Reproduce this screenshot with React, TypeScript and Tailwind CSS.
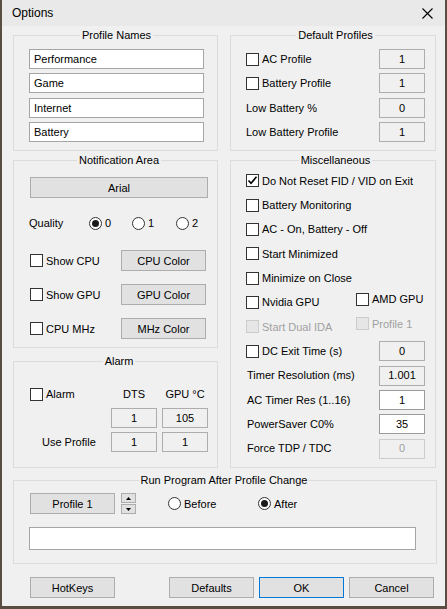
import React from "react";

function Check({ checked = false, disabled = false }: { checked?: boolean; disabled?: boolean }) {
  return (
    <span
      className={
        "flex h-[13px] w-[13px] shrink-0 items-center justify-center border " +
        (disabled ? "border-[#cccccc] bg-[#e6e6e6]" : "border-[#333333] bg-white")
      }
    >
      {checked && (
        <svg width="11" height="11" viewBox="0 0 11 11">
          <path d="M1.5 5.5 L4 8.3 L9.5 1.8" fill="none" stroke="#000" strokeWidth="1.6" />
        </svg>
      )}
    </span>
  );
}

function CheckLabel({
  label,
  checked = false,
  disabled = false,
}: {
  label: string;
  checked?: boolean;
  disabled?: boolean;
}) {
  return (
    <span className="flex items-center gap-[3px]">
      <Check checked={checked} disabled={disabled} />
      <span className={disabled ? "text-[#a0a0a0]" : ""}>{label}</span>
    </span>
  );
}

function Radio({ label, checked = false }: { label: string; checked?: boolean }) {
  return (
    <span className="flex items-center gap-[3px]">
      <span className="flex h-[13px] w-[13px] shrink-0 items-center justify-center rounded-full border border-[#333333] bg-white">
        {checked && <span className="h-[7px] w-[7px] rounded-full bg-[#1a1a1a]" />}
      </span>
      <span>{label}</span>
    </span>
  );
}

function ValueBox({
  value,
  variant = "ro",
}: {
  value: string;
  variant?: "ro" | "edit" | "off";
}) {
  const cls =
    variant === "edit"
      ? "border-[#9a9a9a] bg-white text-black"
      : variant === "off"
        ? "border-[#cccccc] bg-[#f0f0f0] text-[#a0a0a0]"
        : "border-[#adadad] bg-[#f0f0f0] text-black";
  return (
    <div className={"ml-auto flex h-[20px] w-[46px] shrink-0 items-center justify-center border " + cls}>
      {value}
    </div>
  );
}

function Btn({
  children,
  className = "",
  primary = false,
}: {
  children: React.ReactNode;
  className?: string;
  primary?: boolean;
}) {
  return (
    <button
      type="button"
      className={
        "flex h-[21px] shrink-0 items-center justify-center border bg-[#e1e1e1] " +
        (primary ? "border-[#0078d7] " : "border-[#adadad] ") +
        className
      }
    >
      {children}
    </button>
  );
}

function Group({
  title,
  className = "",
  children,
}: {
  title: string;
  className?: string;
  children: React.ReactNode;
}) {
  return (
    <fieldset className={"min-w-0 border border-[#dcdcdc] " + className}>
      <legend className="mx-auto px-[2px] leading-[16px]">{title}</legend>
      {children}
    </fieldset>
  );
}

function Row({ children, className = "" }: { children: React.ReactNode; className?: string }) {
  return <div className={"flex h-[24.33px] items-center " + className}>{children}</div>;
}

export default function App() {
  return (
    <div className="flex h-[609px] w-[447px] items-start bg-[#5a4e42] pl-[2px] font-['Liberation_Sans',Arial,sans-serif] text-[11px] text-black">
      <div className="flex h-[606px] w-[443px] flex-col bg-[#f0f0f0]">
        {/* title bar */}
        <div className="flex h-[26px] shrink-0 items-center bg-[#e9e9e9] pl-[10px] pr-[12px]">
          <span className="text-[12px]">Options</span>
          <svg className="ml-auto" width="11" height="11" viewBox="0 0 11 11">
            <path d="M0.5 0.5 L10.5 10.5 M10.5 0.5 L0.5 10.5" stroke="#000" strokeWidth="1.1" />
          </svg>
        </div>

        <div className="flex flex-col pl-[11px] pr-[8px] pt-[1px]">
          <div className="flex gap-[12px]">
            {/* left column */}
            <div className="flex w-[205px] flex-col">
              <Group title="Profile Names" className="pb-[6px] pl-[15px] pr-[13px] pt-[4px]">
                {["Performance", "Game", "Internet", "Battery"].map((n) => (
                  <Row key={n}>
                    <div className="flex h-[20px] w-full items-center border border-[#a5a5a5] bg-white pl-[4px]">
                      {n}
                    </div>
                  </Row>
                ))}
              </Group>

              <Group title="Notification Area" className="mt-[1px] pb-[8px] pl-[16px] pr-[9px] pt-[9px]">
                <Btn className="w-full">Arial</Btn>
                <div className="mt-[16px] flex h-[18px] items-center">
                  <span className="-ml-[1px] w-[60px]">Quality</span>
                  <span className="w-[43px]">
                    <Radio label="0" checked />
                  </span>
                  <span className="w-[44px]">
                    <Radio label="1" />
                  </span>
                  <Radio label="2" />
                </div>
                {[
                  ["Show CPU", "CPU Color", "mt-[18px]"],
                  ["Show GPU", "GPU Color", "mt-[13px]"],
                  ["CPU MHz", "MHz Color", "mt-[13px]"],
                ].map(([l, b, m]) => (
                  <div key={l} className={"flex h-[21px] items-center " + m}>
                    <span className="w-[91px]">
                      <CheckLabel label={l} />
                    </span>
                    <Btn className="w-[85px]">{b}</Btn>
                  </div>
                ))}
              </Group>

              <Group title="Alarm" className="mt-[5px] pb-[15px] pl-[16px] pr-[9px]">
                <div className="mt-[17px] flex h-[16px] items-center">
                  <span className="w-[81px]">
                    <CheckLabel label="Alarm" />
                  </span>
                  <span className="w-[46px] text-center">DTS</span>
                  <span className="ml-[5px] w-[46px] text-center">GPU °C</span>
                </div>
                <div className="mt-[6px] flex items-center">
                  <span className="w-[81px]" />
                  <ValueBox value="1" />
                  <span className="ml-[5px] flex">
                    <ValueBox value="105" />
                  </span>
                </div>
                <div className="mt-[4px] flex items-center">
                  <span className="w-[81px] pl-[12px]">Use Profile</span>
                  <ValueBox value="1" />
                  <span className="ml-[5px] flex">
                    <ValueBox value="1" />
                  </span>
                </div>
              </Group>
            </div>

            {/* right column */}
            <div className="flex w-[206px] flex-col">
              <Group title="Default Profiles" className="pb-[6px] pl-[15px] pr-[10px] pt-[4px]">
                <Row>
                  <CheckLabel label="AC Profile" />
                  <ValueBox value="1" />
                </Row>
                <Row>
                  <CheckLabel label="Battery Profile" />
                  <ValueBox value="1" />
                </Row>
                <Row>
                  <span>Low Battery %</span>
                  <ValueBox value="0" />
                </Row>
                <Row>
                  <span>Low Battery Profile</span>
                  <ValueBox value="1" />
                </Row>
              </Group>

              <Group title="Miscellaneous" className="mt-[1px] pb-[6px] pl-[15px] pr-[10px] pt-[0.5px]">
                <Row>
                  <CheckLabel label="Do Not Reset FID / VID on Exit" checked />
                </Row>
                <Row>
                  <CheckLabel label="Battery Monitoring" />
                </Row>
                <Row>
                  <CheckLabel label="AC - On, Battery - Off" />
                </Row>
                <Row>
                  <CheckLabel label="Start Minimized" />
                </Row>
                <Row>
                  <CheckLabel label="Minimize on Close" />
                </Row>
                <Row>
                  <span className="w-[110px]">
                    <CheckLabel label="Nvidia GPU" />
                  </span>
                  <span className="mb-[6px]">
                    <CheckLabel label="AMD GPU" />
                  </span>
                </Row>
                <Row>
                  <span className="w-[110px]">
                    <CheckLabel label="Start Dual IDA" disabled />
                  </span>
                  <span className="mb-[6px]">
                    <CheckLabel label="Profile 1" disabled />
                  </span>
                </Row>
                <Row>
                  <CheckLabel label="DC Exit Time (s)" />
                  <ValueBox value="0" />
                </Row>
                <Row>
                  <span className="pl-[1px]">Timer Resolution (ms)</span>
                  <ValueBox value="1.001" />
                </Row>
                <Row>
                  <span className="pl-[1px]">AC Timer Res (1..16)</span>
                  <ValueBox value="1" variant="edit" />
                </Row>
                <Row>
                  <span className="pl-[1px]">PowerSaver C0%</span>
                  <ValueBox value="35" variant="edit" />
                </Row>
                <Row>
                  <span className="pl-[1px]">Force TDP / TDC</span>
                  <ValueBox value="0" variant="off" />
                </Row>
              </Group>
            </div>
          </div>

          <Group title="Run Program After Profile Change" className="mt-[4px] pb-[13px] pl-[16px] pr-[18px] pt-[5px]">
            <div className="flex h-[21px] items-center">
              <Btn className="w-[85px]">Profile 1</Btn>
              <div className="ml-[6px] flex h-[21px] w-[15px] flex-col gap-[1px]">
                <div className="flex flex-1 items-center justify-center border border-[#adadad] bg-[#e1e1e1]">
                  <svg width="5" height="3" viewBox="0 0 5 3">
                    <path d="M0 3 L2.5 0 L5 3 Z" fill="#000" />
                  </svg>
                </div>
                <div className="flex flex-1 items-center justify-center border border-[#adadad] bg-[#e1e1e1]">
                  <svg width="5" height="3" viewBox="0 0 5 3">
                    <path d="M0 0 L2.5 3 L5 0 Z" fill="#000" />
                  </svg>
                </div>
              </div>
              <span className="ml-[32px] w-[90px]">
                <Radio label="Before" />
              </span>
              <Radio label="After" checked />
            </div>
            <div className="-ml-[1px] mt-[13px] h-[23px] w-[387px] border border-[#a5a5a5] bg-white" />
          </Group>

          <div className="mt-[13px] flex h-[21px] items-center pl-[17px]">
            <Btn className="w-[85px]">HotKeys</Btn>
            <div className="ml-[54px] flex gap-[5px]">
              <Btn className="w-[85px]">Defaults</Btn>
              <Btn className="w-[85px]" primary>
                OK
              </Btn>
              <Btn className="w-[85px]">Cancel</Btn>
            </div>
          </div>
        </div>
      </div>
    </div>
  );
}
